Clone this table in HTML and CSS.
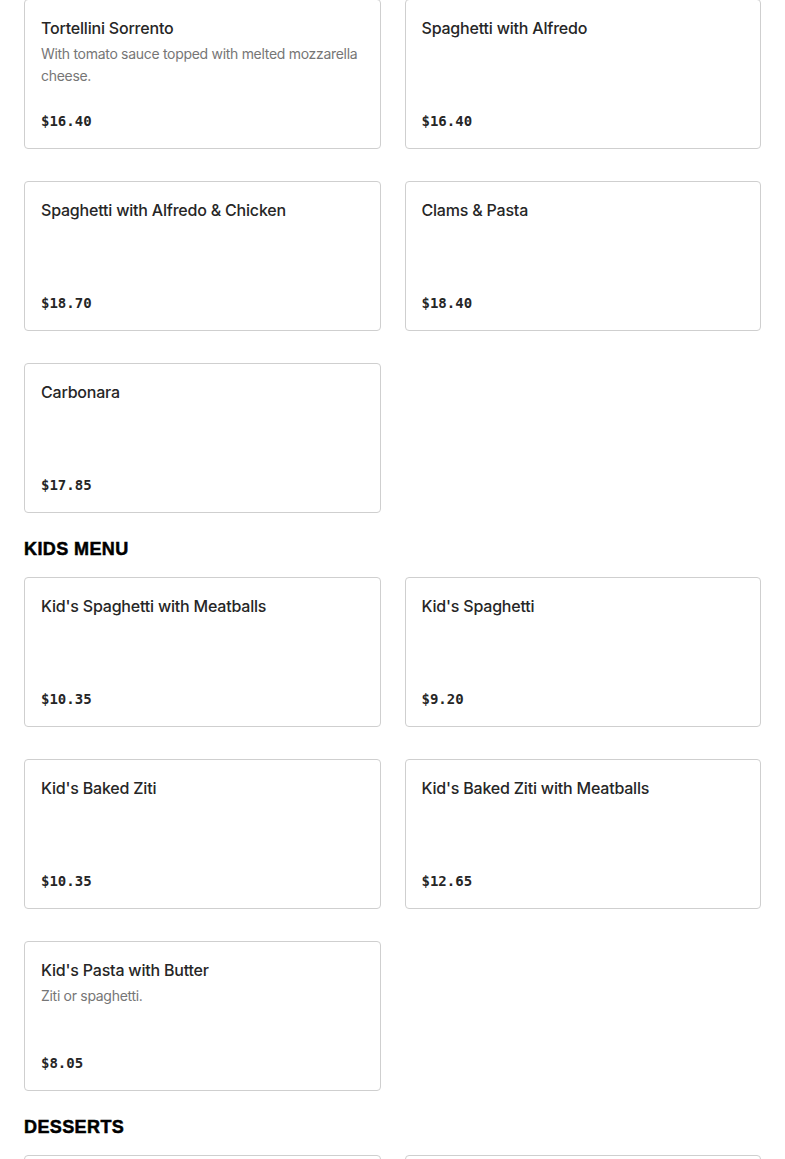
FILE: index.html
```html
<!DOCTYPE html>
<html lang="en">
<head>
<meta charset="utf-8">
<title>Menu</title>
<link rel="stylesheet" href="styles.css">
</head>
<body>
<main class="menu">
  <section class="section">
    <div class="grid">
      <article class="card">
        <h3 class="name">Tortellini Sorrento</h3>
        <p class="desc">With tomato sauce topped with melted mozzarella cheese.</p>
        <div class="price">$16.40</div>
      </article>
      <article class="card">
        <h3 class="name">Spaghetti with Alfredo</h3>
        <div class="price">$16.40</div>
      </article>
      <article class="card">
        <h3 class="name">Spaghetti with Alfredo &amp; Chicken</h3>
        <div class="price">$18.70</div>
      </article>
      <article class="card">
        <h3 class="name">Clams &amp; Pasta</h3>
        <div class="price">$18.40</div>
      </article>
      <article class="card">
        <h3 class="name">Carbonara</h3>
        <div class="price">$17.85</div>
      </article>
    </div>
  </section>
  <section class="section">
    <h2 class="heading">KIDS MENU</h2>
    <div class="grid">
      <article class="card">
        <h3 class="name">Kid's Spaghetti with Meatballs</h3>
        <div class="price">$10.35</div>
      </article>
      <article class="card">
        <h3 class="name">Kid's Spaghetti</h3>
        <div class="price">$9.20</div>
      </article>
      <article class="card">
        <h3 class="name">Kid's Baked Ziti</h3>
        <div class="price">$10.35</div>
      </article>
      <article class="card">
        <h3 class="name">Kid's Baked Ziti with Meatballs</h3>
        <div class="price">$12.65</div>
      </article>
      <article class="card">
        <h3 class="name">Kid's Pasta with Butter</h3>
        <p class="desc">Ziti or spaghetti.</p>
        <div class="price">$8.05</div>
      </article>
    </div>
  </section>
  <section class="section">
    <h2 class="heading">DESSERTS</h2>
    <div class="grid">
      <article class="card">
        <h3 class="name">Cannoli</h3>
        <div class="price">$5.75</div>
      </article>
      <article class="card">
        <h3 class="name">Tiramisu</h3>
        <div class="price">$7.50</div>
      </article>
    </div>
  </section>
</main>
</body>
</html>
```
FILE: styles.css
```css
html, body {
  margin: 0;
  padding: 0;
  background: #fff;
}
body {
  font-family: Inter, "Noto Sans", sans-serif;
  color: #262626;
}
.menu {
  padding: 0 24px;
  margin-top: -1px;
}
.section + .section {
  margin-top: 24px;
}
.heading {
  margin: 0 0 16px;
  font-family: "Liberation Sans", Arial, sans-serif;
  font-weight: 900;
  font-size: 18px;
  line-height: 24px;
  letter-spacing: 0.4px;
  color: #000;
  -webkit-text-stroke: 0.5px #000;
}
.grid {
  display: grid;
  grid-template-columns: 1fr 1fr;
  column-gap: 24px;
  row-gap: 32px;
}
.card {
  box-sizing: border-box;
  height: 150px;
  border: 1px solid #cfcfcf;
  border-radius: 4px;
  padding: 16px;
  display: flex;
  flex-direction: column;
}
.name {
  margin: 0;
  font-size: 16px;
  line-height: 24px;
  font-weight: 500;
  color: #262626;
  letter-spacing: -0.2px;
}
.desc {
  margin: 3px 0 0;
  font-size: 14px;
  line-height: 22px;
  color: #767676;
  letter-spacing: -0.3px;
}
.price {
  margin-top: auto;
  font-family: "DejaVu Sans Mono", "Liberation Mono", monospace;
  font-size: 14px;
  line-height: 22px;
  font-weight: 600;
  color: #262626;
}
```
